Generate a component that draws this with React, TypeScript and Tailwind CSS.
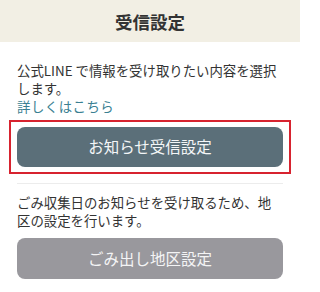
export default function App() {
  return (
    <div
      className="w-[300px] h-[292px] bg-white overflow-hidden text-[#333]"
      style={{ fontFamily: '"Noto Sans CJK JP", "Noto Sans", sans-serif' }}
    >
      <div className="h-[42px] bg-[#f2efe4] flex items-center justify-center">
        <h1 className="text-[17.5px] font-bold leading-none text-[#333] pt-[1px]">受信設定</h1>
      </div>
      <div className="px-[17px] pt-[19px]">
        <p className="text-[13.4px] leading-[18px] whitespace-nowrap">
          公式LINE で情報を受け取りたい内容を選択
          <br />
          します。
        </p>
        <a className="block text-[13.4px] leading-[18px] text-[#3a7f92] tracking-[0.5px]">詳しくはこちら</a>
        <div className="mx-[-8px] mt-[5px] border-2 border-[#d7232f] px-[6px] py-[5px]">
          <button className="w-full h-[40px] rounded-[8px] bg-[#5b6f79] text-[#f4f6f7] text-[15.5px] flex items-center justify-center">
            お知らせ受信設定
          </button>
        </div>
        <div className="mt-[9px] h-px bg-[#ececec]" />
        <p className="mt-[9px] text-[13.4px] leading-[18px] whitespace-nowrap">
          ごみ収集日のお知らせを受け取るため、地
          <br />
          区の設定を行います。
        </p>
        <button className="mt-[9px] w-full h-[41px] rounded-[8px] bg-[#99989d] text-[#f4f4f5] text-[15.5px] flex items-center justify-center">
          ごみ出し地区設定
        </button>
      </div>
    </div>
  );
}
